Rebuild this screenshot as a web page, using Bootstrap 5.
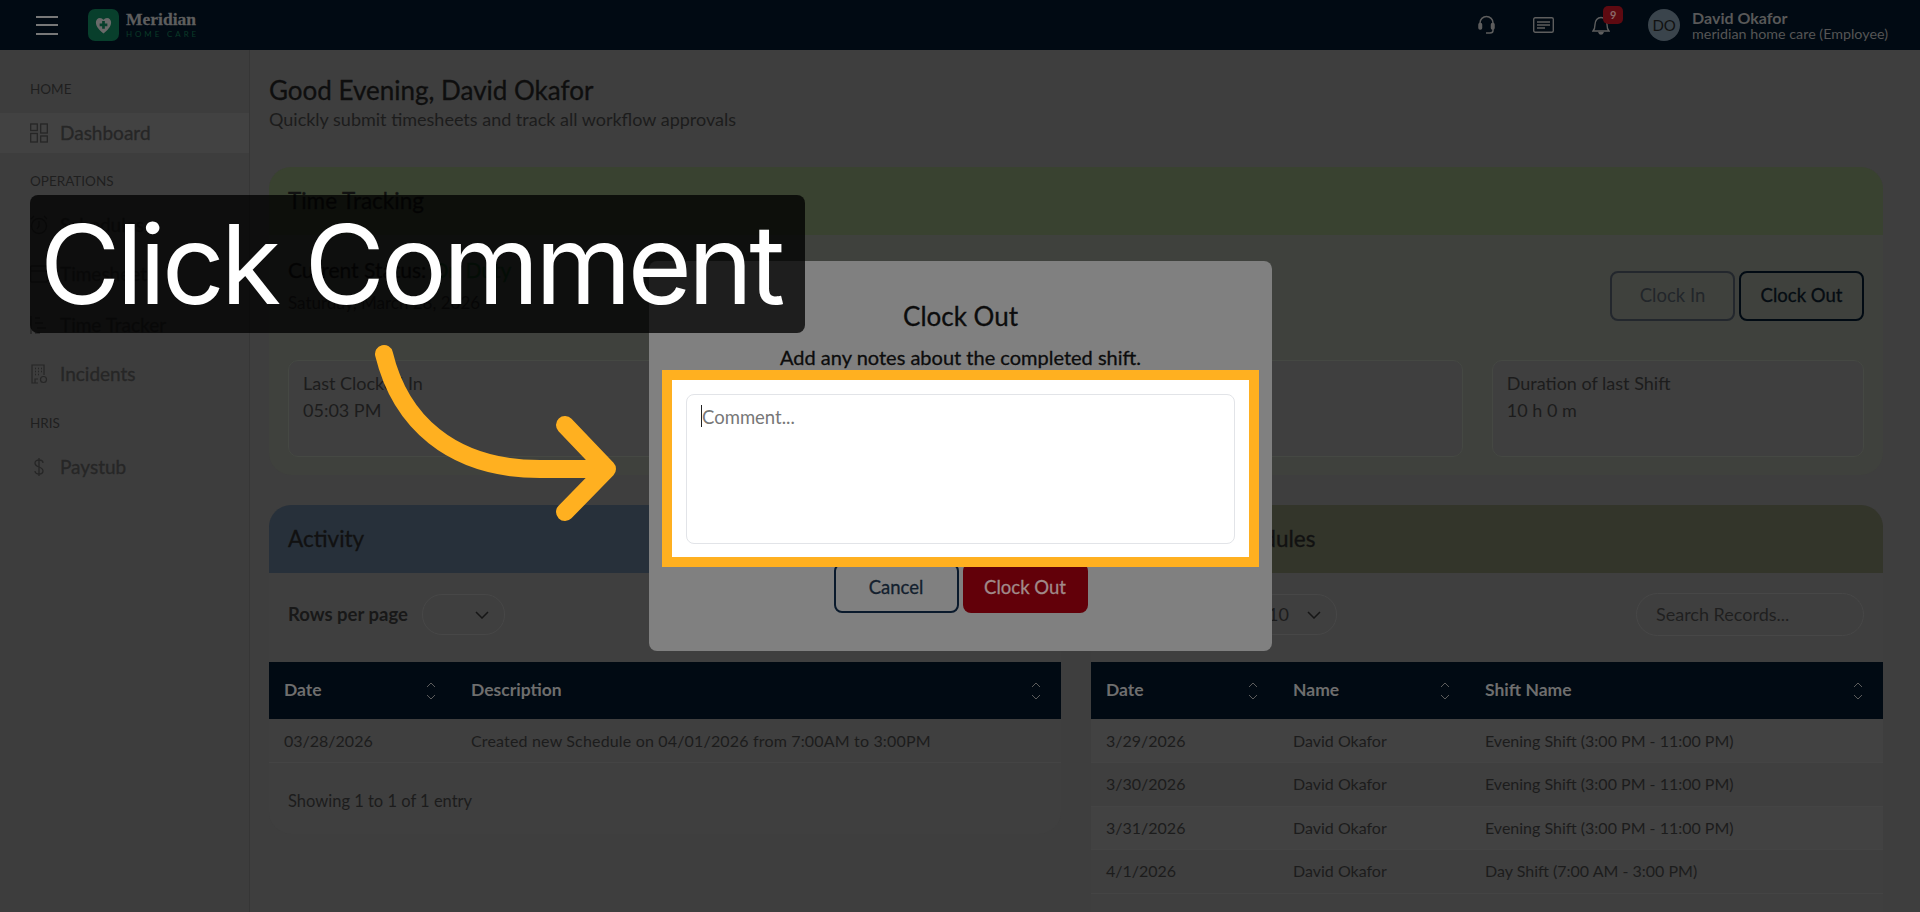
<!DOCTYPE html>
<html lang="en">
<head>
<meta charset="UTF-8">
<title>Meridian Home Care</title>
<link href="https://cdn.jsdelivr.net/npm/bootstrap@5.3.0/dist/css/bootstrap.min.css" rel="stylesheet">
<style>
html, body { height: 100%; }
body {
    width: 1920px; height: 912px; overflow: hidden; position: relative;
    background: #3e3e3e; color: #1c1c1c;
    font-family: "Lato", "Liberation Sans", sans-serif; font-size: 16px;
}
.semi { -webkit-text-stroke: .3px currentColor; }
.top-bar { height: 50px; background: #010a13; padding: 0 32px 0 36px; flex-wrap: nowrap; }
.burger { width: 22px; height: 19px; display: flex; flex-direction: column; justify-content: space-between; margin-right: 30px; }
.burger span { display: block; height: 2px; background: #787878; }
.logo-box { width: 31px; height: 32px; border-radius: 7px; background: #083f2c; margin-right: 7px; }
.logo-name { font: 700 17.500px/15px "Liberation Serif", serif; color: #5e5e5e; -webkit-text-stroke: .3px #5e5e5e; margin-top: 1px; }
.logo-sub { font-size: 8px; line-height: 10px; letter-spacing: 2.900px; color: #0a3a28; margin-top: 2px; }
.top-ico { color: #5e5e5e; position: relative; }
.note-badge { position: absolute; top: -9px; left: 11px; width: 20px; height: 18px; border-radius: 5px; background: #5e0a11; color: #8a6a6a; font-size: 11px; font-weight: 700; text-align: center; line-height: 18px; }
.who-dot { width: 32px; height: 32px; border-radius: 50%; background: #3a444c; color: #111; font-size: 15px; display: flex; align-items: center; justify-content: center; margin-right: 12px; }
.who-name { font-size: 16px; font-weight: 700; line-height: 17px; color: #585858; }
.who-sub { font-size: 14.300px; line-height: 16px; color: #555; }

.side-col { width: 250px; flex: none; border-right: 1px solid #363636; padding-top: 30px; background: #3d3d3d; }
.side-head { font-size: 13.500px; line-height: 18px; color: #1f1f1f; padding-left: 30px; }
.side-link { height: 40px; padding-left: 30px; display: flex; align-items: center; gap: 12px; font-size: 19px; color: #262626; }
.side-link svg { width: 18px; height: 20px; flex: none; }
.side-link.on { background: #424242; }

.page-col { flex: 1; padding: 0 37px 0 19px; min-width: 0; }
.hello { font-size: 26px; font-weight: 400; line-height: 30px; color: #0e0e0e; margin: 25px 0 0; }
.hello-sub { font-size: 18px; line-height: 24px; color: #1c1c1c; margin: 2px 0 0; }
.panel { border: 0; border-radius: 22px; background: #3f3f3f; overflow: hidden; color: inherit; }
.panel .card-header { height: 68px; border: 0; border-radius: 0; display: flex; align-items: center; padding: 0 19px; font-size: 22.500px; color: #111; }
.tint-green { background: #394230 !important; }
.tint-blue { background: #27303a !important; }
.tint-olive { background: #33352a !important; }
.time-panel { margin-top: 35.500px; height: 308.500px; background: #3f413d; }
.time-body { padding: 20px 19px 0; }
.status-line { font-size: 21px; line-height: 30px; color: #111; }
.status-on { color: #123a1c; }
.date-line { font-size: 17px; line-height: 24px; color: #1c1c1c; margin-top: 6px; }
.track-btn { width: 125px; height: 50px; border-radius: 8px; background: transparent; font-size: 18.500px; border: 2px solid #010a13; color: #050c12; padding: 0; }
.track-btn.off { border-color: #23272d; color: #22262a; }
.stat-grid { display: grid; grid-template-columns: repeat(4, 1fr); gap: 29px; margin-top: 39.500px; }
.stat-box { height: 97px; border: 1px solid #454843; border-radius: 10px; background: #3f3f3f; padding: 9px 14px; font-size: 18px; line-height: 27px; color: #1c1c1c; }
.lists { display: grid; grid-template-columns: 1fr 1fr; gap: 30px; margin-top: 30px; }
.list-panel { align-self: start; }
.long-panel { min-height: 440px; }
.tools { height: 89px; padding: 21px 19px 0; }
.tools-label { font-size: 18.500px; font-weight: 700; color: #181818; line-height: 41px; }
.pick { width: 83px; height: 41px; border: 1px solid #474747; border-radius: 20px; background: transparent; color: #1c1c1c; display: flex; align-items: center; justify-content: flex-end; gap: 7px; padding-right: 15px; font-size: 18px; margin-left: 14px; }
.pick-wide { margin-left: 24px; gap: 18px; }
.find { width: 228px; height: 43px; margin-top: -1px; border: 1px solid #474747; border-radius: 22px; background: transparent; padding: 0 19px; font-size: 18px; color: #1f1f1f; line-height: 41px; }
.grid-tbl { margin: 0; table-layout: fixed; font-size: 16px; --bs-table-bg: transparent; --bs-table-color: #1c1c1c; --bs-table-border-color: #444; }
.grid-tbl th { height: 57px; background: #010a13; color: #6e6e6e; font-weight: 700; font-size: 17.500px; vertical-align: middle; padding: 0 20px 0 15px; border: 0; white-space: nowrap; }
.grid-tbl td { height: 43.500px; padding: 0 15px; vertical-align: middle; color: #1c1c1c; border-bottom: 1px solid #444; white-space: nowrap; }
.grid-tbl tr.alt td { background: #424242; }
.grid-tbl td.wide-cell { letter-spacing: .17px; }
.sort-ico { width: 10px; height: 18px; color: #5c5c5c; flex: none; }
.showing { padding: 26px 19px 0; height: 71px; font-size: 16.500px; color: #1c1c1c; }

/* things over the page */
.dlg { position: absolute; left: 649px; top: 261px; width: 623px; height: 390px; background: #808080; border: 0; border-radius: 8px; padding: 39px 13px 0 13px; text-align: center; color: #0c0c0c; }
.dlg-title { font-size: 26px; font-weight: 400; line-height: 32px; margin: 0; }
.dlg-note { font-size: 20px; line-height: 24px; margin: 13px 0 0; }
.spot { position: relative; z-index: 2; margin-top: 1px; border: 10px solid #ffb020; background: #fff; height: 197px; padding: 14px; }
.spot-area { display: block; width: 100%; height: 150px; resize: none; border: 1px solid #e2e4e8; border-radius: 8px; padding: 10px 15px; font: 400 18.500px/24px "Lato", sans-serif; color: #333; box-shadow: none; }
.spot-area::placeholder { color: #777; opacity: 1; }
.caret-mark { position: absolute; left: 15px; top: 11px; width: 1px; height: 22px; background: #222; }
.dlg-foot { margin-top: -4px; gap: 4px; }
.dlg-btn { width: 125px; height: 50px; padding: 0; border-radius: 8px; font-size: 18.500px; }
.dlg-btn.cancel { background: transparent; border: 2px solid #0a1a2c; color: #13202e; }
.dlg-btn.go { background: #620009; border: 0; color: #a08a8a; }
.callout { position: absolute; left: 30px; top: 195px; width: 775px; height: 138px; border-radius: 8px; background: rgba(0,0,0,.77); color: #fff; font-family: "Inter", sans-serif; font-weight: 400; font-size: 110px; line-height: 138px; padding-left: 10px; white-space: nowrap; letter-spacing: -3.900px; }
.pointer { position: absolute; left: 360px; top: 330px; width: 280px; height: 200px; }
</style>
</head>
<body>

<nav class="navbar top-bar">
    <div class="d-flex align-items-center">
        <div class="burger"><span></span><span></span><span></span></div>
        <div class="logo-box d-flex align-items-center justify-content-center">
            <svg width="17" height="19" viewBox="0 0 19 20"><path d="M9.500 19C5 15.500 1 11.500 1 6.500 1 3.500 3 1.500 5.500 1.500c1.700 0 3.100.8 4 2.200.9-1.400 2.300-2.200 4-2.200C16 1.500 18 3.500 18 6.500c0 5-4 9-8.500 12.500z" fill="#6a6a6a"/><path d="M8 5h3v2.800h2.800v3H11v2.800H8v-2.800H5.200v-3H8z" fill="#083f2c"/></svg>
        </div>
        <div>
            <div class="logo-name">Meridian</div>
            <div class="logo-sub">HOME CARE</div>
        </div>
    </div>
    <div class="d-flex align-items-center">
        <div class="top-ico" style="margin-right:38px">
            <svg class="d-block" width="17" height="20" viewBox="0 0 17 20" fill="none" stroke="currentColor" stroke-width="1.500"><path d="M2 12V8a6.500 6.500 0 0 1 13 0v4"/><rect x="1" y="8.500" width="2.500" height="5.500" rx="1" fill="currentColor"/><rect x="13.500" y="8.500" width="2.500" height="5.500" rx="1" fill="currentColor"/><path d="M15 14v1.500c0 1.500-1.500 2.500-3 2.500H8"/></svg>
        </div>
        <div class="top-ico" style="margin-right:38px">
            <svg class="d-block" width="21" height="16" viewBox="0 0 21 16" fill="none" stroke="currentColor" stroke-width="1.400"><rect x=".7" y=".7" width="19.600" height="14.600" rx="1.500"/><path d="M4 5h13M4 8h13M4 11h8"/></svg>
        </div>
        <div class="top-ico" style="margin-right:38px">
            <svg class="d-block" width="18" height="20" viewBox="0 0 18 20" fill="none" stroke="currentColor" stroke-width="1.400"><path d="M1 16c1.500-1.500 2-3 2-6.500C3 5.500 5.500 2.500 9 2.500s6 3 6 7c0 3.500.5 5 2 6.500z"/><path d="M7 17.500c.3 1 1 1.500 2 1.500s1.700-.5 2-1.500z" fill="currentColor"/></svg>
            <span class="note-badge">9</span>
        </div>
        <div class="who-dot">DO</div>
        <div>
            <div class="who-name">David Okafor</div>
            <div class="who-sub">meridian home care (Employee)</div>
        </div>
    </div>
</nav>

<div class="d-flex" style="height:862px">
    <aside class="side-col">
        <div class="side-head">HOME</div>
        <div class="side-link on semi" style="margin-top:15px">
            <svg viewBox="0 0 18 20" fill="none" stroke="currentColor" stroke-width="1.300"><rect x=".7" y="1" width="6.600" height="6.500"/><rect x="10.700" y="1" width="6.600" height="9"/><rect x=".7" y="10.500" width="6.600" height="8.500"/><rect x="10.700" y="13" width="6.600" height="6"/></svg>
            Dashboard
        </div>
        <div class="side-head" style="margin-top:19px">OPERATIONS</div>
        <div class="side-link semi" style="margin-top:15px">
            <svg viewBox="0 0 18 20" fill="none" stroke="currentColor" stroke-width="1.300"><circle cx="9" cy="11" r="7.500"/><path d="M9 6v5l-2 3M1 4l3-3M17 4l-3-3"/></svg>
            Schedules
        </div>
        <div class="side-link semi" style="margin-top:9px">
            <svg viewBox="0 0 18 20" fill="none" stroke="currentColor" stroke-width="1.300"><rect x=".7" y="2" width="16.600" height="16" rx="1"/><path d="M.7 7h16.600"/></svg>
            Timesheets
        </div>
        <div class="side-link semi" style="margin-top:11px">
            <svg viewBox="0 0 18 20" fill="none" stroke="currentColor" stroke-width="1.500"><path d="M1 1v18M5 3h5M5 8h8M7 13h9M5 18h5"/></svg>
            Time Tracker
        </div>
        <div class="side-link semi" style="margin-top:9px">
            <svg viewBox="0 0 18 20" fill="none" stroke="currentColor" stroke-width="1.200"><path d="M8 19H2V1h12v10M5 19v-4h3"/><path d="M5 4.500h1M8 4.500h1M11 4.500h1M5 7.500h1M8 7.500h1M11 7.500h1M5 10.500h1M8 10.500h1" stroke-width="1.500"/><circle cx="13.500" cy="15.500" r="3"/></svg>
            Incidents
        </div>
        <div class="side-head" style="margin-top:20px">HRIS</div>
        <div class="side-link semi" style="margin-top:15px">
            <svg viewBox="0 0 18 20" fill="none" stroke="currentColor" stroke-width="1.300"><path d="M13 6c0-2-1.800-3-4-3S5 4 5 6c0 5 8 3 8 8 0 2-1.800 3-4 3s-4-1-4-3M9 1v18"/></svg>
            Paystub
        </div>
    </aside>

    <main class="page-col">
        <h1 class="hello semi">Good Evening, David Okafor</h1>
        <p class="hello-sub">Quickly submit timesheets and track all workflow approvals</p>

        <div class="card panel time-panel">
            <div class="card-header tint-green semi">Time Tracking</div>
            <div class="time-body">
                <div class="d-flex justify-content-between align-items-start">
                    <div>
                        <div class="status-line semi">Current Status: <span class="status-on">On Duty</span></div>
                        <div class="date-line">Saturday, March 28, 2026</div>
                    </div>
                    <div class="d-flex gap-1" style="margin-top:16px">
                        <button class="btn track-btn off">Clock In</button>
                        <button class="btn track-btn semi">Clock Out</button>
                    </div>
                </div>
                <div class="stat-grid">
                    <div class="stat-box">Last Clocked In<br>05:03 PM</div>
                    <div class="stat-box">Last Clocked Out<br>03:03 PM</div>
                    <div class="stat-box"></div>
                    <div class="stat-box">Duration of last Shift<br>10 h 0 m</div>
                </div>
            </div>
        </div>

        <div class="lists">
            <div class="card panel list-panel">
                <div class="card-header tint-blue semi">Activity</div>
                <div class="tools d-flex align-items-start">
                    <span class="tools-label">Rows per page</span>
                    <div class="pick"><svg width="14" height="8" viewBox="0 0 14 8" fill="none" stroke="#161616" stroke-width="1.500"><path d="M1 1l6 6 6-6"/></svg></div>
                </div>
                <table class="table grid-tbl">
                    <colgroup><col style="width:187px"><col></colgroup>
                    <thead><tr>
                        <th><div class="d-flex justify-content-between align-items-center">Date<svg class="sort-ico" viewBox="0 0 10 18" fill="none" stroke="currentColor"><path d="M1 5l4-4 4 4M1 13l4 4 4-4"/></svg></div></th>
                        <th><div class="d-flex justify-content-between align-items-center">Description<svg class="sort-ico" viewBox="0 0 10 18" fill="none" stroke="currentColor"><path d="M1 5l4-4 4 4M1 13l4 4 4-4"/></svg></div></th>
                    </tr></thead>
                    <tbody><tr>
                        <td>03/28/2026</td>
                        <td class="wide-cell">Created new Schedule on 04/01/2026 from 7:00AM to 3:00PM</td>
                    </tr></tbody>
                </table>
                <div class="showing">Showing 1 to 1 of 1 entry</div>
            </div>

            <div class="card panel list-panel long-panel">
                <div class="card-header tint-olive semi">Upcoming Schedules</div>
                <div class="tools d-flex justify-content-between align-items-start">
                    <div class="d-flex">
                        <span class="tools-label">Rows per page</span>
                        <div class="pick pick-wide">10 <svg width="14" height="8" viewBox="0 0 14 8" fill="none" stroke="#161616" stroke-width="1.500"><path d="M1 1l6 6 6-6"/></svg></div>
                    </div>
                    <div class="find">Search Records...</div>
                </div>
                <table class="table grid-tbl">
                    <colgroup><col style="width:187px"><col style="width:192px"><col></colgroup>
                    <thead><tr>
                        <th><div class="d-flex justify-content-between align-items-center">Date<svg class="sort-ico" viewBox="0 0 10 18" fill="none" stroke="currentColor"><path d="M1 5l4-4 4 4M1 13l4 4 4-4"/></svg></div></th>
                        <th><div class="d-flex justify-content-between align-items-center">Name<svg class="sort-ico" viewBox="0 0 10 18" fill="none" stroke="currentColor"><path d="M1 5l4-4 4 4M1 13l4 4 4-4"/></svg></div></th>
                        <th><div class="d-flex justify-content-between align-items-center">Shift Name<svg class="sort-ico" viewBox="0 0 10 18" fill="none" stroke="currentColor"><path d="M1 5l4-4 4 4M1 13l4 4 4-4"/></svg></div></th>
                    </tr></thead>
                    <tbody>
                        <tr class="alt"><td>3/29/2026</td><td>David Okafor</td><td>Evening Shift (3:00 PM - 11:00 PM)</td></tr>
                        <tr><td>3/30/2026</td><td>David Okafor</td><td>Evening Shift (3:00 PM - 11:00 PM)</td></tr>
                        <tr class="alt"><td>3/31/2026</td><td>David Okafor</td><td>Evening Shift (3:00 PM - 11:00 PM)</td></tr>
                        <tr><td>4/1/2026</td><td>David Okafor</td><td>Day Shift (7:00 AM - 3:00 PM)</td></tr>
                    </tbody>
                </table>
            </div>
        </div>
    </main>
</div>

<div class="modal-content dlg">
    <h2 class="dlg-title semi">Clock Out</h2>
    <p class="dlg-note semi">Add any notes about the completed shift.</p>
    <div class="spot">
        <div class="position-relative">
            <textarea class="form-control spot-area" placeholder="Comment..."></textarea>
            <span class="caret-mark"></span>
        </div>
    </div>
    <div class="d-flex justify-content-center dlg-foot">
        <button class="btn dlg-btn cancel semi">Cancel</button>
        <button class="btn dlg-btn go semi">Clock Out</button>
    </div>
</div>

<div class="callout">Click Comment</div>
<svg class="pointer" viewBox="0 0 280 200" fill="none" stroke="#ffb020" stroke-width="18" stroke-linecap="round" stroke-linejoin="round">
    <path d="M24 24C40 90 90 139 180 139L242 139"/>
    <path d="M205 95L247 139L205 182"/>
</svg>

</body>
</html>
